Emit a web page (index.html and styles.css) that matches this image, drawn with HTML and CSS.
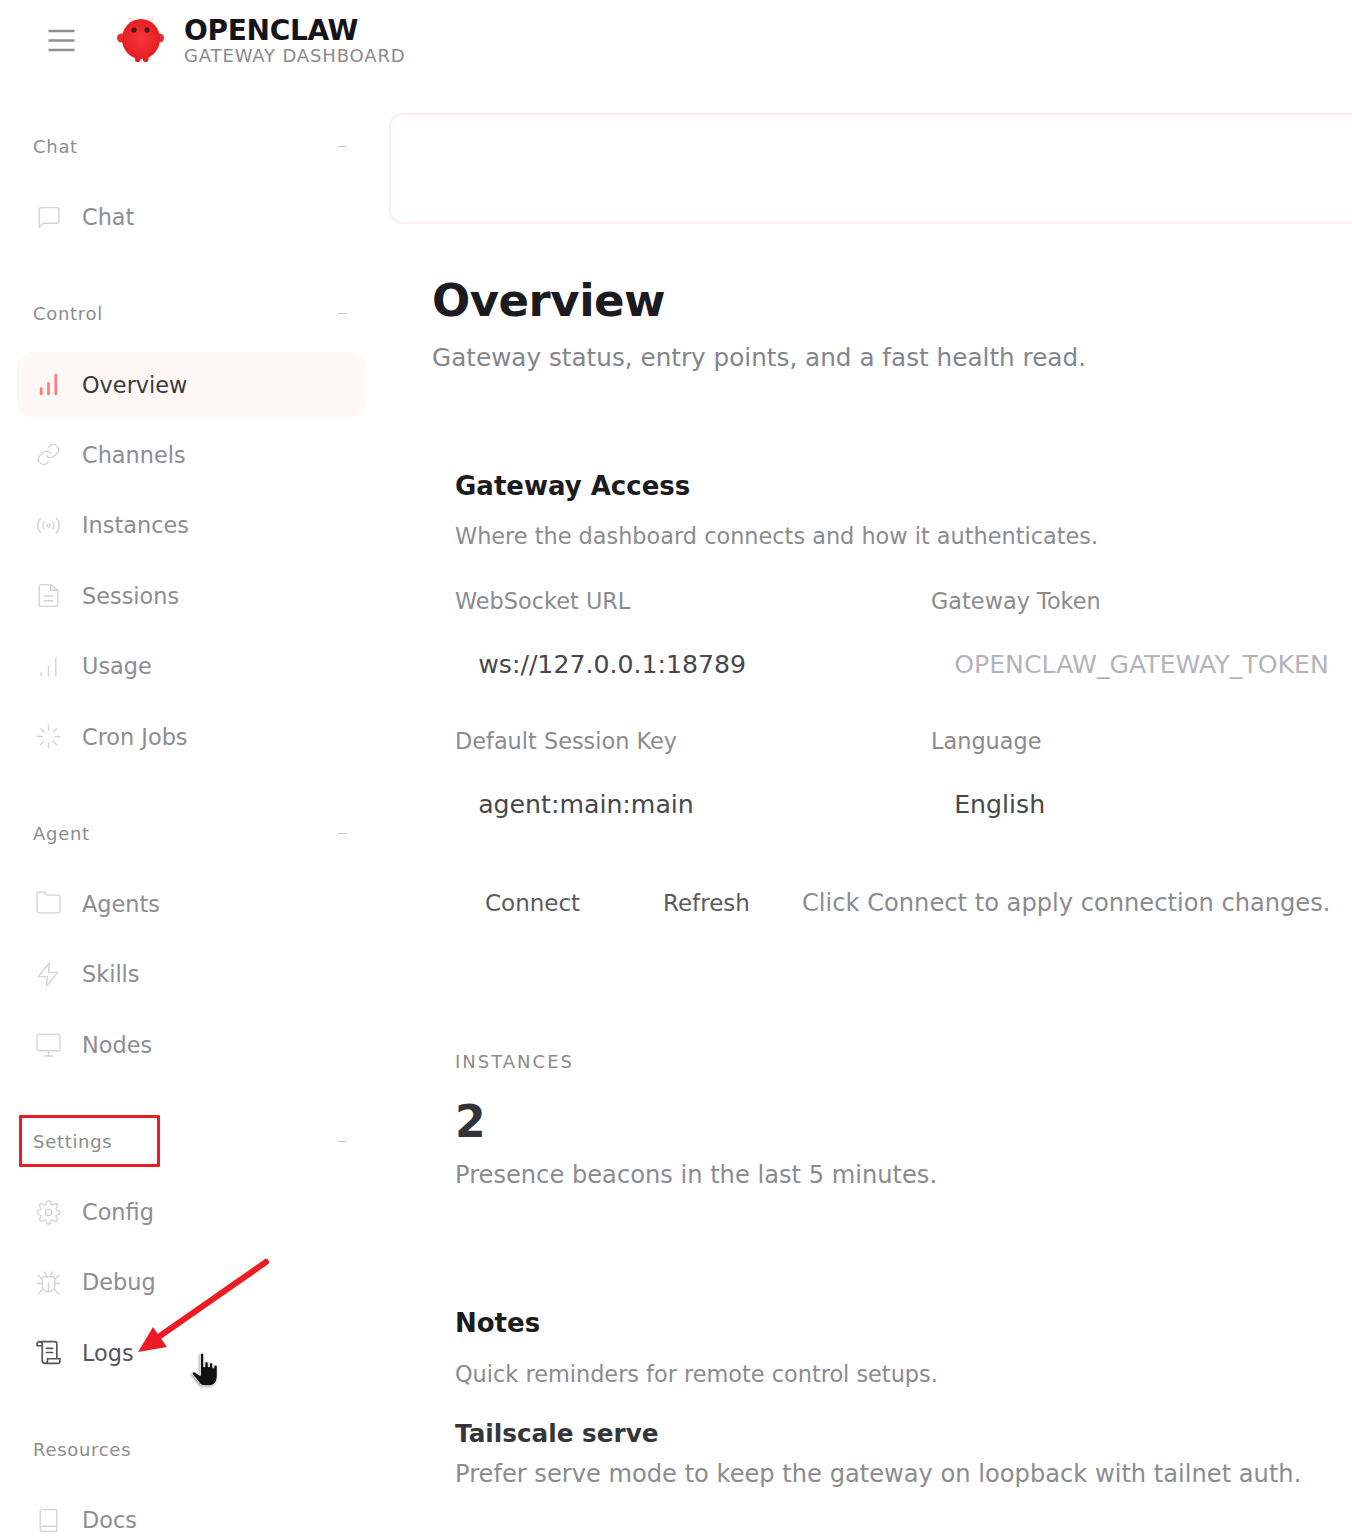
FILE: index.html
```html
<!DOCTYPE html>
<html lang="en">
<head>
<meta charset="utf-8">
<title>OpenClaw Gateway Dashboard</title>
<link rel="stylesheet" href="styles.css">
</head>
<body>
<div class="shell">
  <header class="topbar">
    <svg class="burger" viewBox="0 0 26 24" fill="none" stroke="#8f8f8f" stroke-width="2.4"><path d="M0 3h26M0 12.500h26M0 22h26"/></svg>
    <svg class="logo" viewBox="0 0 48 48"><defs><radialGradient id="lg" cx=".5" cy=".5" r=".6"><stop offset="0" stop-color="#f7373a"/><stop offset="1" stop-color="#e01a1e"/></radialGradient></defs><path d="M13 2l5 4M37 2l-5 4" stroke="#f7caca" stroke-width="1.3"/><rect x="19" y="38" width="5.500" height="8" rx="2.500" fill="#e52024"/><rect x="27" y="38" width="5.500" height="8" rx="2.500" fill="#e52024"/><circle cx="5.500" cy="22" r="4.500" fill="#ef2b2b"/><circle cx="43.500" cy="22" r="4.500" fill="#ef2b2b"/><ellipse cx="25" cy="23" rx="19" ry="20" fill="url(#lg)"/><circle cx="18" cy="14" r="2.600" fill="#4a1515"/><circle cx="31" cy="14" r="2.600" fill="#4a1515"/></svg>
    <div class="brand">
      <div class="brand-name">OPENCLAW</div>
      <div class="brand-sub">GATEWAY DASHBOARD</div>
    </div>
  </header>
  <div class="body-row">
    <nav class="sidebar">
      <section class="group">
        <div class="group-head"><span>Chat</span><i class="dash"></i></div>
        <a class="item"><svg class="ico" viewBox="0 0 24 24"><path d="M3 4.500a2 2 0 0 1 2-2h15a2 2 0 0 1 2 2v11a2 2 0 0 1-2 2H7l-4 4z"/></svg>Chat</a>
      </section>
      <section class="group">
        <div class="group-head"><span>Control</span><i class="dash"></i></div>
        <a class="item active"><svg class="ico" viewBox="0 0 24 24"><path d="M5 21v-5M12 21V11M19 21V3" stroke-width="2.600"/></svg>Overview</a>
        <a class="item"><svg class="ico" viewBox="0 0 24 24"><path d="M10 13a5 5 0 0 0 7.500.5l3-3a5 5 0 0 0-7-7l-1.700 1.700"/><path d="M14 11a5 5 0 0 0-7.500-.5l-3 3a5 5 0 0 0 7 7l1.700-1.700"/></svg>Channels</a>
        <a class="item"><svg class="ico" viewBox="0 0 24 24"><path d="M4.500 5a10 10 0 0 0 0 14M19.500 5a10 10 0 0 1 0 14M8 8.500a5 5 0 0 0 0 7M16 8.500a5 5 0 0 1 0 7"/><circle cx="12" cy="12" r="1.500"/></svg>Instances</a>
        <a class="item"><svg class="ico" viewBox="0 0 24 24"><path d="M14 1.500H5a2 2 0 0 0-2 2v17a2 2 0 0 0 2 2h14a2 2 0 0 0 2-2V7z"/><path d="M14 1.500V7h7M8 12.500h8M8 17h8"/></svg>Sessions</a>
        <a class="item"><svg class="ico" viewBox="0 0 24 24"><path d="M5 21v-3M12 21v-9M19 21V4"/></svg>Usage</a>
        <a class="item"><svg class="ico" viewBox="0 0 24 24"><path d="M12 1v5M12 18v5M1 12h5M18 12h5M4.200 4.200l3.500 3.500M16.300 16.300l3.500 3.500M4.200 19.800l3.500-3.500M16.300 7.700l3.500-3.500"/></svg>Cron Jobs</a>
      </section>
      <section class="group">
        <div class="group-head"><span>Agent</span><i class="dash"></i></div>
        <a class="item"><svg class="ico" viewBox="0 0 24 24"><path d="M23 19a2 2 0 0 1-2 2H3a2 2 0 0 1-2-2V3a2 2 0 0 1 2-2h5l3 3h10a2 2 0 0 1 2 2z"/></svg>Agents</a>
        <a class="item"><svg class="ico" viewBox="0 0 24 24"><path d="M13 1L2 14h9l-1 9 11-13h-9z"/></svg>Skills</a>
        <a class="item"><svg class="ico" viewBox="0 0 24 24"><rect x="1" y="2" width="22" height="16" rx="2"/><path d="M8 23h8M12 18v5"/></svg>Nodes</a>
      </section>
      <section class="group">
        <div class="group-head"><span>Settings</span><i class="dash"></i></div>
        <a class="item"><svg class="ico" viewBox="0 0 24 24"><circle cx="12" cy="12" r="3"/><path d="M19.400 15a1.700 1.700 0 0 0 .3 1.800l.1.100a2 2 0 1 1-2.800 2.800l-.1-.1a1.700 1.700 0 0 0-2.900 1.200V21a2 2 0 1 1-4 0v-.1a1.700 1.700 0 0 0-2.900-1.200l-.1.100a2 2 0 1 1-2.800-2.800l.1-.1a1.700 1.700 0 0 0-1.200-2.900H3a2 2 0 1 1 0-4h.1a1.700 1.700 0 0 0 1.200-2.900l-.1-.1a2 2 0 1 1 2.800-2.800l.1.100a1.700 1.700 0 0 0 2.900-1.200V3a2 2 0 1 1 4 0v.1a1.700 1.700 0 0 0 2.900 1.200l.1-.1a2 2 0 1 1 2.800 2.800l-.1.100a1.700 1.700 0 0 0 1.200 2.900h.1a2 2 0 1 1 0 4h-.1a1.700 1.700 0 0 0-1.500 1z"/></svg>Config</a>
        <a class="item"><svg class="ico" viewBox="0 0 24 24"><path d="M8 2l2 3M16 2l-2 3M8 6.500h8a2 2 0 0 1 2 2V15a6 6 0 0 1-12 0V8.500a2 2 0 0 1 2-2zM12 12v8M1 13h5M18 13h5M2 5l4 4M22 5l-4 4M2 23l4-4M22 23l-4-4"/></svg>Debug</a>
        <a class="item current"><svg class="ico" viewBox="0 0 24 24"><path d="M6 20V4a2.500 2.500 0 0 0-2.500-2.500A2.500 2.500 0 0 0 1 4v1.500h5M3.500 1.500H18a2 2 0 0 1 2 2V18M10 8h6M10 12h6M6 20a2.500 2.500 0 0 0 2.500 2.500H21a2 2 0 0 0 2-2V18H11v2a2.500 2.500 0 0 1-2.500 2.500"/></svg>Logs</a>
      </section>
      <section class="group">
        <div class="group-head"><span>Resources</span></div>
        <a class="item"><svg class="ico" viewBox="0 0 24 24"><path d="M4 19.500V4a2.500 2.500 0 0 1 2.500-2.500H20v21H6.500A2.500 2.500 0 0 1 4 20M4 17.500h16"/></svg>Docs</a>
      </section>
    </nav>
    <main class="content">
      <div class="callout"></div>
      <h1 class="title">Overview</h1>
      <p class="lede">Gateway status, entry points, and a fast health read.</p>
      <section class="card access">
        <h2 class="card-title">Gateway Access</h2>
        <p class="card-sub">Where the dashboard connects and how it authenticates.</p>
        <div class="fields">
          <div class="field"><label>WebSocket URL</label><div class="value">ws://127.0.0.1:18789</div></div>
          <div class="field"><label>Gateway Token</label><div class="value placeholder">OPENCLAW_GATEWAY_TOKEN</div></div>
          <div class="field"><label>Default Session Key</label><div class="value">agent:main:main</div></div>
          <div class="field"><label>Language</label><div class="value">English</div></div>
        </div>
        <div class="actions">
          <button class="btn btn-connect">Connect</button>
          <button class="btn btn-refresh">Refresh</button>
          <span class="hint">Click Connect to apply connection changes.</span>
        </div>
      </section>
      <section class="card stat">
        <div class="stat-label">INSTANCES</div>
        <div class="stat-value">2</div>
        <p class="stat-note">Presence beacons in the last 5 minutes.</p>
      </section>
      <section class="card notes">
        <h2 class="card-title">Notes</h2>
        <p class="card-sub">Quick reminders for remote control setups.</p>
        <h3 class="note-title">Tailscale serve</h3>
        <p class="note-text">Prefer serve mode to keep the gateway on loopback with tailnet auth.</p>
      </section>
    </main>
  </div>
</div>
<div class="mark-box"></div>
<svg class="mark-arrow" viewBox="0 0 135 97"><path d="M129 6L20 82" stroke="#ed1c24" stroke-width="6" stroke-linecap="round" fill="none"/><path d="M1 96L16 71L30 91z" fill="#ed1c24"/></svg>
<svg class="mark-hand" viewBox="1 0 26 32"><path d="M9 2.500c0-2 3-2 3 0V13l1 0v-3c0-1.800 3-1.800 3 0v3h1v-2c0-1.800 3-1.800 3 0v3h1v-1c0-1.800 3-1.800 3 0v8c0 5-2 9-8 9h-3c-3 0-4.500-1.500-6-4l-5-6c-1-1.500 1-3 2.500-2L9 21z" fill="#111" stroke="#fff" stroke-width=".8"/></svg>
</body>
</html>
```
FILE: styles.css
```css
* { box-sizing: border-box; }
html, body { margin: 0; padding: 0; background: #fff; }
body { width: 1352px; height: 1539px; overflow: hidden; position: relative; font-family: "DejaVu Sans", sans-serif; color: #8b8b90; }
.shell { width: 1352px; }
.topbar { height: 80px; display: flex; align-items: center; padding-left: 48px; }
.burger { width: 27px; height: 24px; margin-right: 41px; }
.logo { width: 48px; height: 48px; margin-right: 20px; }
.brand { display: flex; flex-direction: column; padding-top: 3px; }
.brand-name { font-size: 28px; font-weight: 700; line-height: 28px; color: #14141a; letter-spacing: -.3px; }
.brand-sub { font-size: 18px; line-height: 21px; color: #8a8a8f; letter-spacing: .85px; }
.body-row { display: flex; align-items: flex-start; }
.sidebar { width: 389px; flex: none; padding: 33px 23px 0 17px; }
.group { margin-bottom: 31px; }
.group-head { height: 66px; margin-bottom: 6px; display: flex; justify-content: space-between; align-items: center; padding: 1px 20px 0 16px; font-size: 18px; letter-spacing: .7px; color: #8d8d90; }
.dash { width: 8px; height: 1px; background: #c8c8c8; }
.item { height: 64.4px; margin-bottom: 6px; display: flex; align-items: center; gap: 21px; padding-left: 19px; font-size: 22.4px; color: #8d8d92; border-radius: 16px; }
.item.active { background: #fff8f7; color: #3d3a3e; }
.item.current { color: #55555a; }
.ico { width: 25px; height: 25px; flex: none; fill: none; stroke: #d3d3d3; stroke-width: 1.300; stroke-linecap: round; stroke-linejoin: round; }
.active .ico { stroke: #fb7d7d; }
.current .ico { stroke: #55555a; stroke-width: 1.600; }
.content { flex: none; width: 1000px; padding-top: 33px; }
.callout { height: 111px; border: 2px solid #fdecee; border-radius: 14px; margin-bottom: 47px; }
.title { margin: 0 0 0 43px; font-size: 45px; line-height: 60px; font-weight: 700; color: #1a1a1f; letter-spacing: -.5px; }
.lede { margin: 9px 0 0 43px; font-size: 24.7px; line-height: 36px; color: #85858a; }
.card { margin-left: 66px; }
.access { margin-top: 92px; }
.card-title { margin: 0; font-size: 26px; line-height: 36px; font-weight: 700; color: #1c1c20; }
.card-sub { margin: 14px 0 0; font-size: 22.4px; line-height: 36px; color: #8b8b90; }
.notes .card-sub { margin-top: 15px; }
.fields { display: grid; grid-template-columns: 476px 476px; margin-top: 15px; }
.field { height: 140px; }
.field label { display: block; font-size: 22.4px; line-height: 36px; padding-top: 14px; height: 50px; color: #8b8b90; }
.value { font-size: 25.2px; padding: 28px 23.2px 0; line-height: 36px; color: #47474c; white-space: nowrap; }
.placeholder { color: #b4b4b8; }
.actions { display: flex; align-items: center; margin-top: 0; height: 108px; white-space: nowrap; }
.btn { border: 0; background: none; font: inherit; font-size: 23px; color: #5a5a5f; padding: 0; text-align: left; }
.btn-connect { margin-left: 30px; width: 178px; }
.btn-refresh { width: 139px; }
.hint { font-size: 24.15px; color: #8b8b90; }
.stat { margin-top: 92px; }
.stat-label { font-size: 18px; line-height: 26px; letter-spacing: 2px; color: #8b8b90; }
.stat-value { font-size: 44px; font-weight: 700; line-height: 60px; margin-top: 17px; color: #33333a; }
.stat-note { margin: 5px 0 0; font-size: 24.15px; line-height: 36px; color: #8b8b90; }
.notes { margin-top: 112px; }
.note-title { margin: 24px 0 0; font-size: 24.7px; line-height: 36px; font-weight: 700; color: #35353a; }
.note-text { margin: 4px 0 0; font-size: 24.15px; line-height: 36px; color: #8b8b90; white-space: nowrap; }
.mark-box { position: absolute; left: 19px; top: 1115px; width: 141px; height: 52px; border: 3.500px solid #ed1c24; border-radius: 1px; }
.mark-arrow { position: absolute; left: 137px; top: 1256px; width: 135px; height: 97px; }
.mark-hand { position: absolute; left: 191px; top: 1352px; width: 30px; height: 36px; filter: drop-shadow(-1px 1px 1px rgba(0, 0, 0, .35)); }
```
